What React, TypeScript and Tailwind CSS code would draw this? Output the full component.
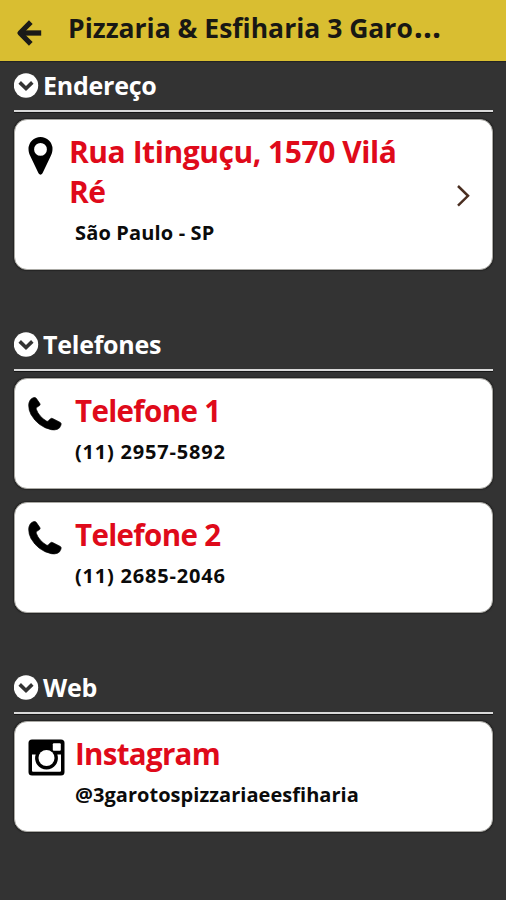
import type { ReactNode } from "react";

function SectionHeading({ label }: { label: string }) {
  return (
    <div className="flex h-[51px] items-start gap-[4.5px] border-b-2 border-[#d9d9d9] pt-[12px] shadow-[0_1px_0_#161616]">
      <svg className="-ml-[0.5px] size-[25px] shrink-0" viewBox="0 0 25 25" fill="none">
        <circle cx="12" cy="12.5" r="12.2" fill="#fff" />
        <path d="M5.700 9.400l6.300 6.100 6.300-6.100" stroke="#333" strokeWidth="3.600" />
      </svg>
      <h2 className="-mt-px whitespace-nowrap text-[25px] font-bold leading-[26px] tracking-[-0.25px] text-white">
        {label}
      </h2>
    </div>
  );
}

function Card({ icon, children, className = "" }: { icon: ReactNode; children: ReactNode; className?: string }) {
  return (
    <div
      className={`flex rounded-[13px] border border-[#aaa9a4] bg-white shadow-[0_0_1px_1px_#242424] ${className}`}
    >
      <div className="w-[54px] shrink-0 pl-[13px] pt-[17px]">{icon}</div>
      {children}
    </div>
  );
}

function PinIcon() {
  return (
    <svg className="h-[38px] w-[25px]" viewBox="0 0 25 38">
      <path
        fillRule="evenodd"
        d="M12.5 0A12 12 0 0 0 .5 12c0 3 .8 5 2 7.600L10.500 36.300q2 2.800 4 0L22.500 19.600c1.200-2.600 2-4.600 2-7.600A12 12 0 0 0 12.500 0zm0 6a6.400 6.400 0 1 1 0 12.800 6.400 6.400 0 0 1 0-12.800z"
      />
    </svg>
  );
}

function PhoneIcon() {
  return (
    <svg className="mt-[1px] h-[33px] w-[34px] overflow-visible" viewBox="0 0 101 100">
      <path
        d="M15 2Q21 0 24 4L35 20Q37 24 34 26L26 31Q23 33 24 37Q32 59 55 73Q59 75 62 71L67 66Q70 63 75 66L97 77Q101 80 99 85Q96 95 88 98Q79 101 69 99Q29 90 8 53Q1 40 1 25Q2 7 15 2Z"
        stroke="#000"
        strokeWidth="2"
      />
    </svg>
  );
}

function InstagramIcon() {
  return (
    <svg className="h-[37px] w-[37px]" viewBox="0 0 37 37">
      <rect x=".5" y=".5" width="36" height="36" rx="3.500" />
      <path d="M4 15.500h3.700a11.400 11.400 0 1 0 21.600 0H33v16.300a1 1 0 0 1-1 1H5a1 1 0 0 1-1-1z" fill="#fff" />
      <circle cx="18.500" cy="19" r="8" fill="#fff" />
      <rect x="24.800" y="4.300" width="8" height="7.500" rx="1" fill="#fff" />
    </svg>
  );
}

export default function App() {
  return (
    <div className="h-[900px] w-[506px] overflow-hidden bg-[#333] font-['Open_Sans',sans-serif]">
      <header className="flex h-[61px] items-start bg-[#d9be31] shadow-[0_1px_1px_#242424]">
        <svg
          className="ml-[16px] mt-[19px] h-[27px] w-[26px] shrink-0"
          viewBox="0 0 26 27"
          fill="none"
          stroke="#1a1a18"
          strokeLinejoin="round"
        >
          <path d="M25.200 14H5" strokeWidth="5.300" />
          <path d="M14.800 3.200L4 14l10.800 10.800" strokeWidth="5.200" />
        </svg>
        <h1 className="ml-[26px] mt-[8px] whitespace-nowrap text-[26.5px] font-bold leading-[40px] text-[#181814]">
          Pizzaria &amp; Esfiharia 3 Garo<span className="ml-px text-[32px] leading-none">…</span>
        </h1>
      </header>

      <main className="pl-[14px] pr-[13px]">
        <section className="mb-[50px]">
          <SectionHeading label="Endereço" />
          <Card icon={<PinIcon />} className="mt-[7px] h-[151px]">
            <div className="w-[371px] pt-[12px]">
              <h3 className="text-[30px] font-bold leading-[40px] tracking-[-0.45px] text-[#df0a1a]">
                Rua Itinguçu, 1570 Vilá
                <br />
                Ré
              </h3>
              <p className="ml-[6px] mt-[6px] text-[20px] font-bold leading-[30px] tracking-[0.15px] text-[#0b0b0b]">
                São Paulo - SP
              </p>
            </div>
            <svg className="ml-[17px] mt-[65px] h-[22px] w-[13px] shrink-0" viewBox="0 0 13 22" fill="none">
              <path d="M1 1l10 9.800L1 20.600" stroke="#4a2e20" strokeWidth="2.500" />
            </svg>
          </Card>
        </section>

        <section className="mb-[50px]">
          <SectionHeading label="Telefones" />
          <div className="mt-[7px] flex flex-col gap-[13px]">
            <Card icon={<PhoneIcon />} className="h-[111px]">
              <div className="pl-[6px] pt-[12px]">
                <h3 className="text-[29.5px] font-bold leading-[40px] tracking-[-0.65px] text-[#df0a1a]">Telefone 1</h3>
                <p className="mt-[6px] text-[20px] font-bold leading-[30px] tracking-[0.8px] text-[#0b0b0b]">
                  (11) 2957-5892
                </p>
              </div>
            </Card>
            <Card icon={<PhoneIcon />} className="h-[111px]">
              <div className="pl-[6px] pt-[12px]">
                <h3 className="text-[29.5px] font-bold leading-[40px] tracking-[-0.65px] text-[#df0a1a]">Telefone 2</h3>
                <p className="mt-[6px] text-[20px] font-bold leading-[30px] tracking-[0.8px] text-[#0b0b0b]">
                  (11) 2685-2046
                </p>
              </div>
            </Card>
          </div>
        </section>

        <section>
          <SectionHeading label="Web" />
          <Card icon={<InstagramIcon />} className="mt-[7px] h-[111px]">
            <div className="pl-[6px] pt-[12px]">
              <h3 className="text-[29.5px] font-bold leading-[40px] tracking-[-0.7px] text-[#df0a1a]">Instagram</h3>
              <p className="mt-[6px] text-[20px] font-bold leading-[30px] tracking-[0.04px] text-[#0b0b0b]">
                @3garotospizzariaeesfiharia
              </p>
            </div>
          </Card>
        </section>
      </main>
    </div>
  );
}
